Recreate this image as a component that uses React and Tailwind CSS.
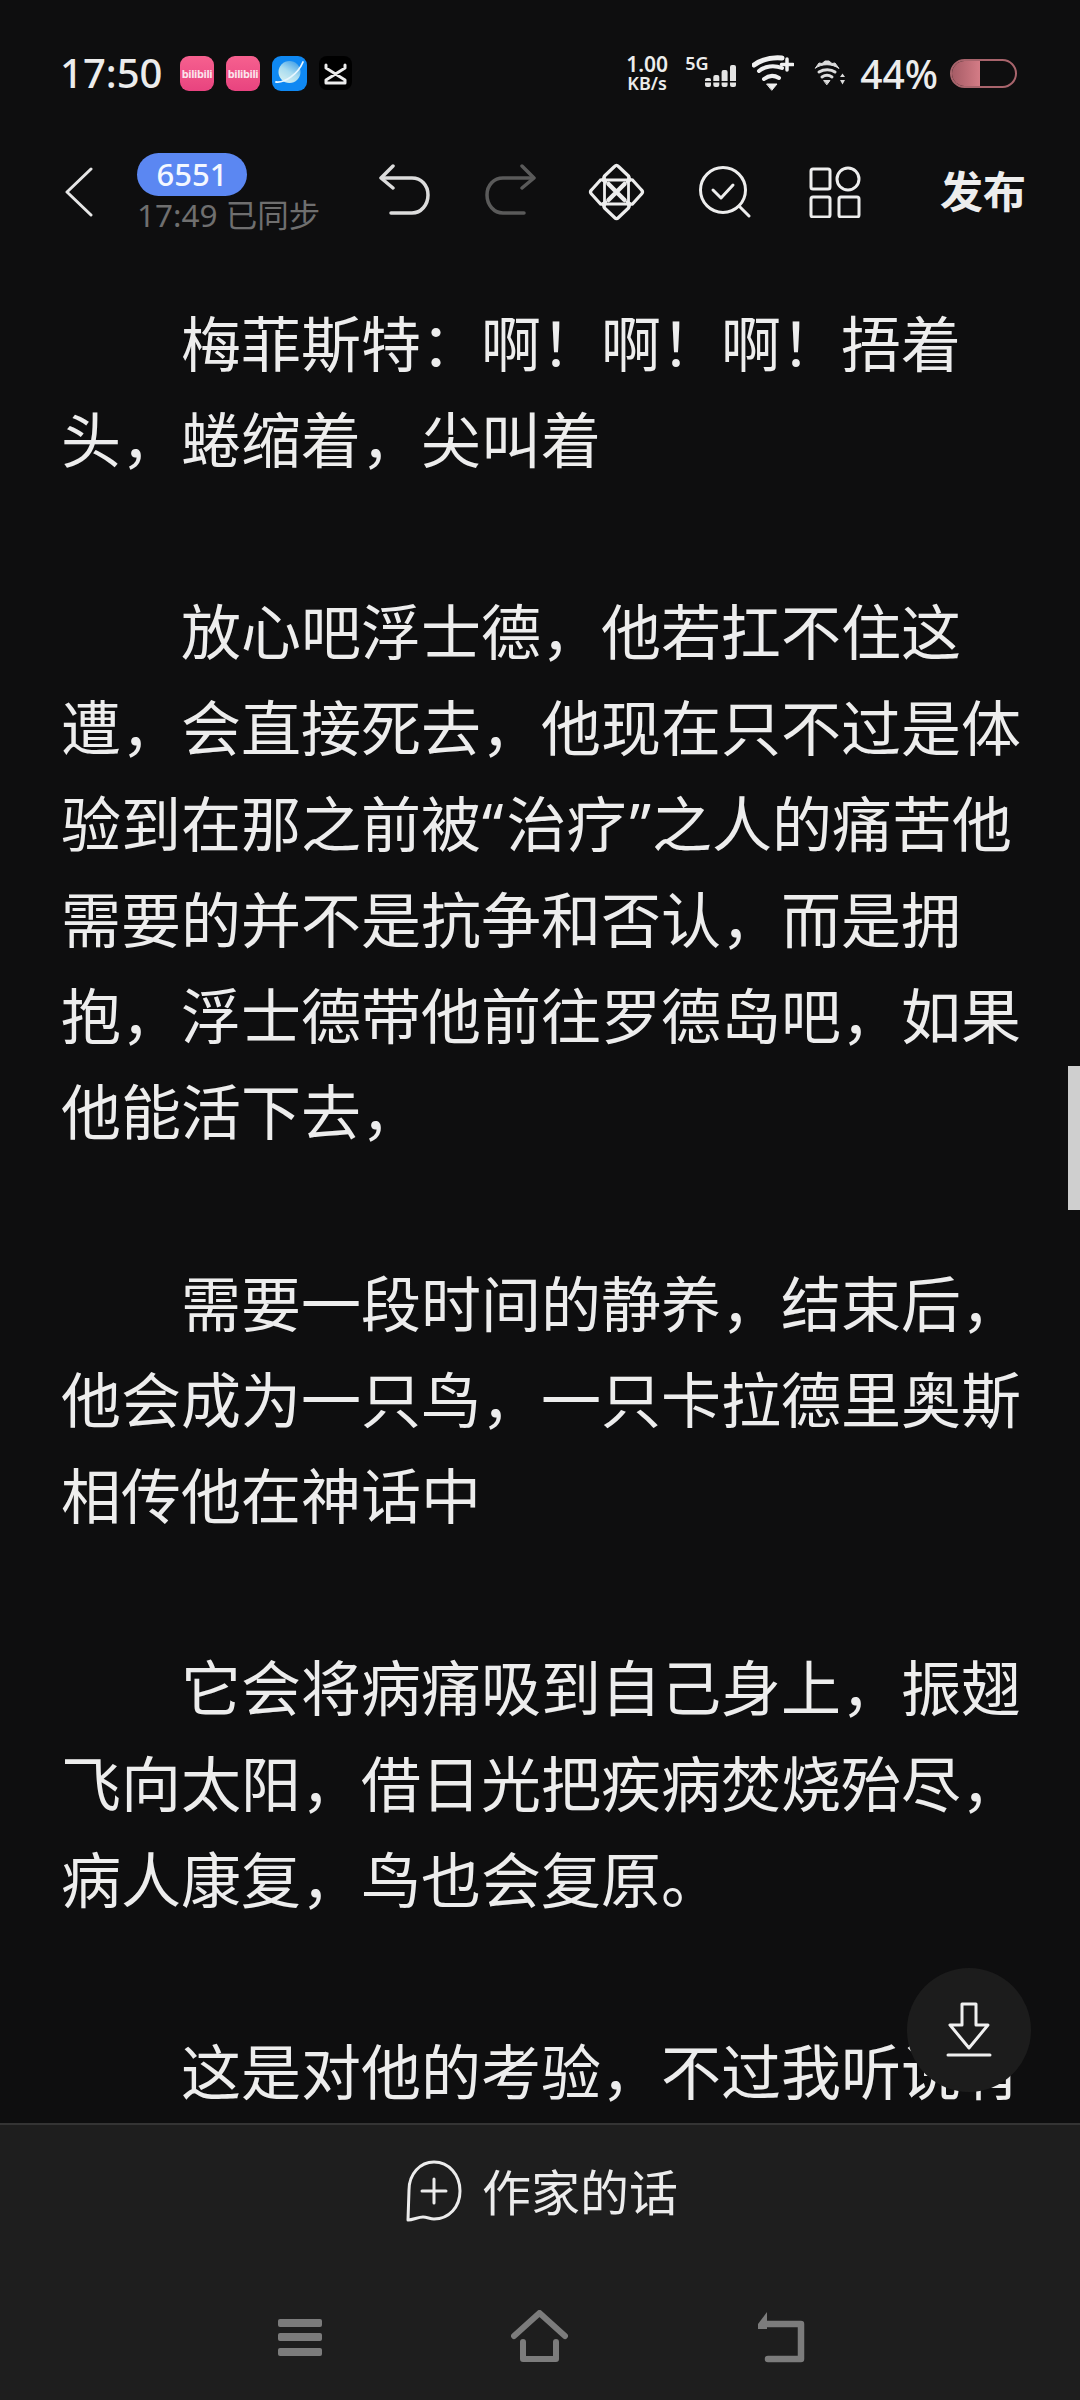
import React from "react";

const Q1 = () => <span className="ml-[1px] mr-[3px]">“</span>;
const Q2 = () => <span className="ml-[3px] mr-[1px]">”</span>;

const paragraphs = [
  ["梅菲斯特：啊！啊！啊！捂着", "头，蜷缩着，尖叫着"],
  [
    "放心吧浮士德，他若扛不住这",
    "遭，会直接死去，他现在只不过是体",
    <>验到在那之前被<Q1 />治疗<Q2 />之人的痛苦他</>,
    "需要的并不是抗争和否认，而是拥",
    "抱，浮士德带他前往罗德岛吧，如果",
    "他能活下去，",
  ],
  ["需要一段时间的静养，结束后，", "他会成为一只鸟，一只卡拉德里奥斯", "相传他在神话中"],
  ["它会将病痛吸到自己身上，振翅", "飞向太阳，借日光把疾病焚烧殆尽，", "病人康复，鸟也会复原。"],
  ["这是对他的考验，不过我听说有"],
];

const font = "font-['Noto_Sans','Noto_Sans_CJK_SC',sans-serif]";

function Bili() {
  return (
    <div className="w-[34px] h-[35px] rounded-[9px] bg-gradient-to-b from-[#f6608f] to-[#e8437f] flex items-center justify-center overflow-hidden">
      <span className="text-[11px] leading-none font-bold text-[#fbe3ec] tracking-[-0.4px]">bilibili</span>
    </div>
  );
}

function Planet() {
  return (
    <svg width="35" height="35" viewBox="0 0 35 35">
      <defs>
        <linearGradient id="pg" x1="0.8" y1="0" x2="0.2" y2="1">
          <stop offset="0" stopColor="#3f9fe8" />
          <stop offset="0.5" stopColor="#a9dcf0" />
          <stop offset="1" stopColor="#d8f0f0" />
        </linearGradient>
      </defs>
      <rect width="35" height="35" rx="9" fill="#0f88f2" />
      <circle cx="17.500" cy="16" r="11" fill="url(#pg)" />
      <path d="M4 26C13 27 26 18 31 6" stroke="#e8f6ff" strokeWidth="1.800" fill="none" strokeLinecap="round" />
    </svg>
  );
}

function CapCut() {
  return (
    <svg width="33" height="34" viewBox="0 0 33 34">
      <rect width="33" height="34" rx="8" fill="#000" />
      <path d="M7 9V12L26 24V27H7V24L26 12V9" stroke="#ececec" strokeWidth="3" fill="none" strokeLinejoin="round" strokeLinecap="round" />
    </svg>
  );
}

function Signal() {
  return (
    <svg width="31" height="22" viewBox="0 0 31 22" fill="#e4e4e4">
      <rect x="0" y="13" width="6" height="9" rx="2" />
      <rect x="8.300" y="10" width="6" height="12" rx="2" />
      <rect x="16.600" y="5" width="6" height="17" rx="2" />
      <rect x="25" y="0" width="6" height="22" rx="2" />
      <rect x="0" y="16" width="31" height="1.500" fill="#0e0e0f" />
    </svg>
  );
}

function WifiPlus() {
  return (
    <svg width="42" height="36" viewBox="0 0 42 36" fill="none" stroke="#f0f0f0" strokeLinecap="round">
      <path d="M2 10C9 5 18 2 30 3" strokeWidth="5" />
      <path d="M7 16C13 11 22 10 30 13" strokeWidth="4" />
      <path d="M12 24C17 20 22 20 27 23" strokeWidth="4" />
      <path d="M15 29H25L20 35Z" fill="#f0f0f0" stroke="#f0f0f0" strokeWidth="1" strokeLinejoin="round" />
      <path d="M35 4V15M29.500 9.500H41" strokeWidth="3.500" />
    </svg>
  );
}

function WifiSmall() {
  return (
    <svg width="32" height="26" viewBox="0 0 32 26" fill="none" stroke="#dcdcdc" strokeLinecap="round">
      <path d="M1.500 8L5 3L8 3.500L11 1H15L18 3.500L21 3L25 8.500C18 3.500 8 3.500 1.500 8Z" fill="#dcdcdc" strokeWidth="1" strokeLinejoin="round" />
      <path d="M5 12C10 9 17 9 21 12" strokeWidth="3" />
      <path d="M8 17C11 15 15 15 18 17" strokeWidth="3" />
      <path d="M10 20.500H16L13 24.500Z" fill="#dcdcdc" stroke="#dcdcdc" strokeWidth="1" />
      <path d="M26 17L28.500 13.500L31 17ZM26 20L31 20L28.500 24.500Z" fill="#dcdcdc" stroke="none" />
    </svg>
  );
}

function Battery() {
  return (
    <div className="w-[67px] h-[29px] rounded-full border-[2px] border-[#a8646c] overflow-hidden flex">
      <div className="w-[28px] h-full bg-gradient-to-r from-[#a65c66] to-[#d47c86]" />
    </div>
  );
}

function Back() {
  return (
    <svg width="28" height="50" viewBox="0 0 28 50" fill="none" stroke="#e6e6e6" strokeWidth="3" strokeLinecap="round" strokeLinejoin="round">
      <path d="M26 2L2 25L26 48" />
    </svg>
  );
}

function Undo({ color = "#dcdcdc", flip = false }) {
  return (
    <svg width="51" height="52" viewBox="0 0 51 52" fill="none" stroke={color} strokeWidth="3.500" strokeLinecap="round" strokeLinejoin="round" className={flip ? "-scale-x-100" : ""}>
      <path d="M14 2L2 14L14 24" />
      <path d="M3 14H33C42 14 49 21 49 31C49 41 42 49 33 49H12" />
    </svg>
  );
}

function Flower() {
  return (
    <svg width="57" height="58" viewBox="-28.500 -29 57 58" fill="none" stroke="#ededed" strokeWidth="3.200" strokeLinejoin="round" strokeLinecap="round">
      <path d="M-2 -25.500Q0 -27.500 2 -25.500L12 -16Q14 -13 11 -10Q14 -13 16 -12L25 -2Q27 0 25 2L16 12Q14 13 11 10Q14 13 12 16L2 25.500Q0 27.500 -2 25.500L-12 16Q-14 13 -11 10Q-14 13 -16 12L-25 2Q-27 0 -25 -2L-16 -12Q-14 -13 -11 -10Q-14 -13 -12 -16Z" />
      <path d="M-12 -14V14M12 -14V14M-14 -12H14M-14 12H14" strokeWidth="2.800" />
      <path d="M-8 -8L8 8M8 -8L-8 8" strokeWidth="4.500" />
    </svg>
  );
}

function CheckSearch() {
  return (
    <svg width="52" height="52" viewBox="0 0 52 52" fill="none" stroke="#ededed" strokeWidth="3" strokeLinecap="round" strokeLinejoin="round">
      <circle cx="24" cy="24" r="22.500" />
      <path d="M14 24L22 32L34 19" />
      <path d="M41 41L50 50" />
    </svg>
  );
}

function Grid() {
  return (
    <svg width="52" height="52" viewBox="0 0 52 52" fill="none" stroke="#ededed" strokeWidth="3" strokeLinejoin="round">
      <rect x="2" y="3" width="19" height="20" rx="2" />
      <circle cx="39" cy="13" r="11" />
      <rect x="2" y="31" width="19" height="20" rx="2" />
      <rect x="30" y="31" width="20" height="20" rx="2" />
    </svg>
  );
}

function Download() {
  return (
    <svg width="46" height="56" viewBox="0 0 46 56" fill="none" stroke="#f0f0f0" strokeWidth="3" strokeLinejoin="round" strokeLinecap="round">
      <path d="M16 2H30V23H42L23 46L4 23H16Z" />
      <path d="M2 53H44" />
    </svg>
  );
}

function NoteAdd() {
  return (
    <svg width="56" height="64" viewBox="0 0 56 64" fill="none" stroke="#ececec" strokeWidth="3" strokeLinecap="round" strokeLinejoin="round">
      <path d="M2 60L3 30C3 14 14 2 28 2C43 2 54 15 54 31C54 47 43 59 28 59C24 59 21 57 17 57C12 57 7 60 2 60Z" />
      <path d="M16 31H40M28 19V43" />
    </svg>
  );
}

function NavMenu() {
  return (
    <svg width="44" height="37" viewBox="0 0 44 37" fill="#7c7c7c">
      <rect y="0" width="44" height="8" rx="2" />
      <rect y="14" width="44" height="8" rx="2" />
      <rect y="29" width="44" height="8" rx="2" />
    </svg>
  );
}

function NavHome() {
  return (
    <svg width="57" height="54" viewBox="0 0 57 54" fill="none" stroke="#7c7c7c" strokeWidth="6" strokeLinejoin="round" strokeLinecap="round">
      <path d="M3 26L28.500 3L54 26" />
      <path d="M12 32V49H45V32" />
    </svg>
  );
}

function NavBack() {
  return (
    <svg width="48" height="52" viewBox="0 0 48 52" fill="none">
      <path d="M8 13H44V48H11" stroke="#7c7c7c" strokeWidth="6.500" strokeLinejoin="round" strokeLinecap="round" />
      <path d="M10 1L1 13V18H10Z" fill="#7c7c7c" />
    </svg>
  );
}

export default function App() {
  return (
    <div className={`${font} relative w-[1080px] h-[2400px] bg-[#0e0e0f] overflow-hidden flex flex-col`}>
      {/* status bar */}
      <div className="h-[54px] mt-[46px] shrink-0 pl-[60px] pr-[63px] flex items-center justify-between">
        <div className="flex items-center">
          <span className="text-[40px] leading-none font-medium text-[#ececec] w-[120px]">17:50</span>
          <div className="flex items-center gap-[12px]">
            <Bili />
            <Bili />
            <Planet />
            <CapCut />
          </div>
        </div>
        <div className="flex items-center">
          <div className="flex flex-col items-center text-[#ececec] font-semibold leading-none w-[44px]">
            <span className="text-[21px] leading-[20px]">1.00</span>
            <span className="text-[18px] leading-[18px]">KB/s</span>
          </div>
          <div className="relative w-[51px] h-[36px] ml-[16px]">
            <span className="absolute left-0 top-[-2px] text-[18px] leading-[20px] font-semibold text-[#ececec]">5G</span>
            <div className="absolute left-[20px] top-[10px]"><Signal /></div>
          </div>
          <div className="ml-[16px]"><WifiPlus /></div>
          <div className="ml-[20px]"><WifiSmall /></div>
          <span className="ml-[14px] text-[39px] leading-none font-medium text-[#ececec]">44%</span>
          <div className="ml-[12px]"><Battery /></div>
        </div>
      </div>

      {/* toolbar */}
      <div className="h-[196px] shrink-0 flex items-start">
        <div className="ml-[65px] mt-[67px]"><Back /></div>
        <div className="ml-[44px] mt-[53px] w-[242px]">
          <div className="w-[110px] h-[43px] rounded-full bg-[#5b87f2] flex items-center justify-center text-[31px] leading-none font-medium text-[#f4f7ff]">6551</div>
          <div className="mt-[2px] text-[31.500px] leading-[34px] text-[#6f6f6f] whitespace-nowrap">17:49 已同步</div>
        </div>
        <div className="mt-[64px]"><Undo /></div>
        <div className="ml-[55px] mt-[64px]"><Undo color="#5a5a5a" flip /></div>
        <div className="ml-[52px] mt-[63px]"><Flower /></div>
        <div className="ml-[54px] mt-[66px]"><CheckSearch /></div>
        <div className="ml-[58px] mt-[66px]"><Grid /></div>
        <div className="ml-[79px] mt-[64px] text-[43px] leading-[56px] font-bold text-[#ededed] whitespace-nowrap">发布</div>
      </div>

      {/* article */}
      <div className="flex-1 overflow-hidden pl-[61px] flex flex-col gap-[96px] text-[60px] leading-[96px] font-normal text-[#ededed]">
        {paragraphs.map((p, i) => (
          <div key={i}>
            {p.map((line, j) => (
              <div key={j} className={`whitespace-nowrap ${j === 0 ? "pl-[120px]" : ""}`}>{line}</div>
            ))}
          </div>
        ))}
      </div>

      {/* bottom bar */}
      <div className="h-[277px] shrink-0 bg-[#1e1e1e] border-t-2 border-[#343434] flex flex-col items-center">
        <div className="mt-[35px] ml-[4px] flex items-center gap-[20px] text-[49px] leading-[62px] text-[#ececec]">
          <NoteAdd />
          <span>作家的话</span>
        </div>
        <div className="mt-[86px] w-full flex items-center pl-[278px]">
          <NavMenu />
          <div className="ml-[189px]"><NavHome /></div>
          <div className="ml-[189px]"><NavBack /></div>
        </div>
      </div>

      {/* scrollbar */}
      <div className="absolute right-0 top-[1066px] w-[12px] h-[144px] bg-[#cfcfcf]" />

      {/* floating button */}
      <div className="absolute left-[907px] top-[1968px] w-[124px] h-[124px] rounded-full bg-[#1c1c1c] flex items-center justify-center">
        <Download />
      </div>
    </div>
  );
}
